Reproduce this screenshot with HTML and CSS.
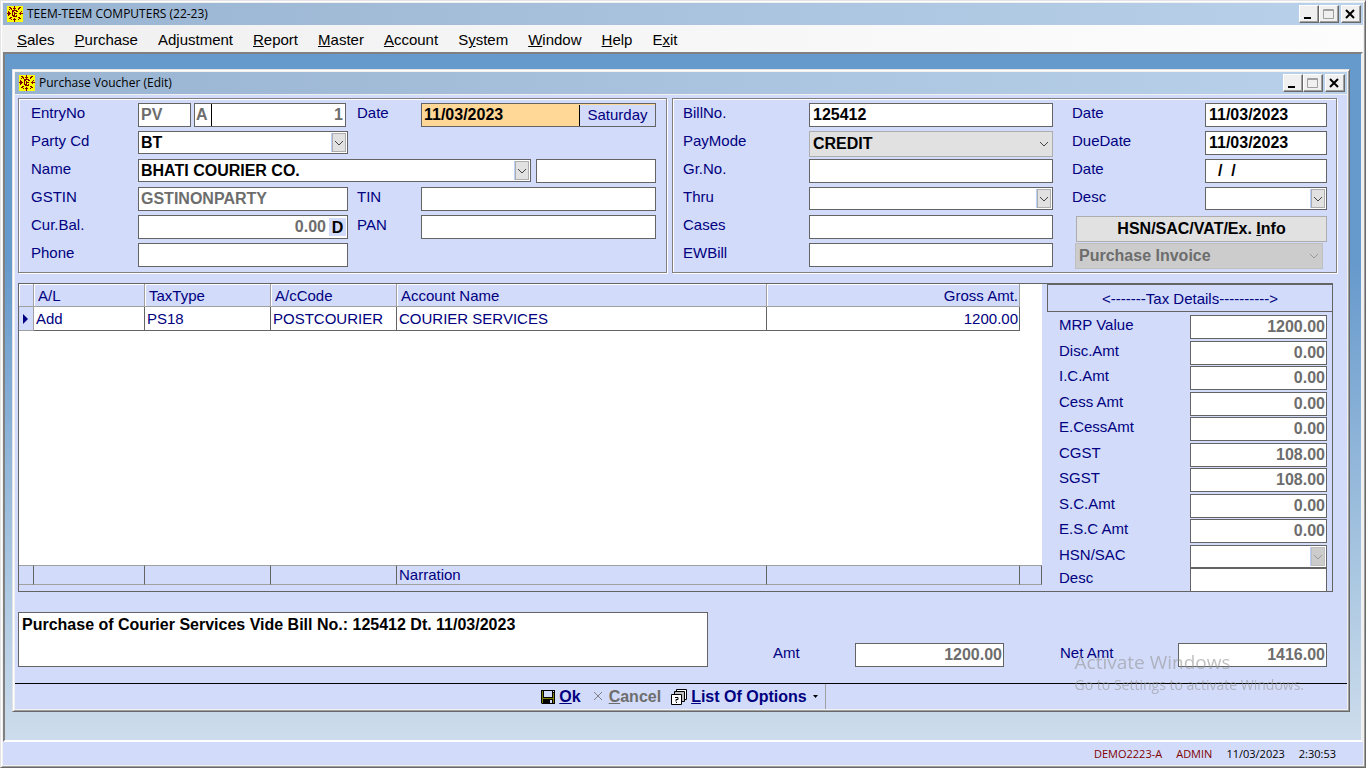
FILE: index.html
```html
<!DOCTYPE html>
<html lang="en">
<head>
  <meta charset="utf-8">
  <title>TEEM-TEEM COMPUTERS (22-23)</title>
  <link rel="stylesheet" href="styles.css">
</head>
<body>

<svg class="defs" aria-hidden="true">
  <symbol id="logo" viewBox="0 0 16 16">
    <rect width="16" height="16" fill="#ff0"/>
    <path d="M7 .5h1M2 1.500h2M7 1.500h1M12 1.500h2M3 2.500h2M6 2.500h3M11 2.500h2M2 3.500h1M4 3.500h1M7 3.500h1M11 3.500h1M5 4.500h5M1 5.500h1M5 5.500h2M9 5.500h2M14 5.500h1M1 6.500h2M5 6.500h1M7 6.500h1M13 6.500h1M0 7.500h4M5 7.500h1M7 7.500h3M12 7.500h4M1 8.500h2M5 8.500h1M7 8.500h1M13 8.500h1M1 9.500h1M5 9.500h2M7 9.500h1M9 9.500h1M6 10.500h4M3 11.500h2M11 11.500h2M2 12.500h2M7 12.500h1M12 12.500h2M4 13.500h1M6 13.500h3M11 13.500h1M7 14.500h1M7 15.500h1" fill="none" stroke="#800000"/>
  </symbol>
  <symbol id="min" viewBox="0 0 16 14"><path d="M4 10h7v2h-7z"/></symbol>
  <symbol id="max" viewBox="0 0 16 14"><path d="M3.500 2.500h10v9h-10zM3 3.500h11" fill="none" stroke="#a0a0a0"/></symbol>
  <symbol id="close" viewBox="0 0 16 14"><path d="M4 3l8 8M12 3l-8 8" fill="none" stroke="#000" stroke-width="2"/></symbol>
</svg>

<div class="app">
  <header class="titlebar">
    <svg class="logo"><use href="#logo"/></svg>
    <h1>TEEM-TEEM COMPUTERS (22-23)</h1>
    <div class="winbtns">
      <button aria-label="Minimize"><svg><use href="#min"/></svg></button>
      <button aria-label="Maximize"><svg><use href="#max"/></svg></button>
      <button aria-label="Close"><svg><use href="#close"/></svg></button>
    </div>
  </header>

  <nav class="menu">
    <a href="#"><u>S</u>ales</a>
    <a href="#"><u>P</u>urchase</a>
    <a href="#">Ad<u>j</u>ustment</a>
    <a href="#"><u>R</u>eport</a>
    <a href="#"><u>M</u>aster</a>
    <a href="#"><u>A</u>ccount</a>
    <a href="#">S<u>y</u>stem</a>
    <a href="#"><u>W</u>indow</a>
    <a href="#"><u>H</u>elp</a>
    <a href="#">E<u>x</u>it</a>
  </nav>

  <main class="desktop">
    <form class="voucher">
      <div class="titlebar">
        <svg class="logo"><use href="#logo"/></svg>
        <h2>Purchase Voucher (Edit)</h2>
        <div class="winbtns">
          <button type="button" aria-label="Minimize"><svg><use href="#min"/></svg></button>
          <button type="button" aria-label="Maximize"><svg><use href="#max"/></svg></button>
          <button type="button" aria-label="Close"><svg><use href="#close"/></svg></button>
        </div>
      </div>

      <div class="body">
        <div class="panels">
          <div class="panel party">
            <label for="series">EntryNo</label>
            <div class="entry">
              <input class="field" id="series" value="PV" disabled>
              <div class="field split">
                <input class="letter" aria-label="Entry book" value="A" disabled>
                <input class="num" aria-label="Entry number" value="1" disabled>
              </div>
            </div>
            <label class="mid" for="date">Date</label>
            <div class="field split date">
              <input id="date" value="11/03/2023">
              <span class="day">Saturday</span>
            </div>

            <label for="partycd">Party Cd</label>
            <select class="field combo" id="partycd"><option>BT</option></select>

            <label class="first" for="name">Name</label>
            <div class="name">
              <select class="field combo" id="name"><option>BHATI COURIER CO.</option></select>
              <input class="field" aria-label="City">
            </div>

            <label for="gstin">GSTIN</label>
            <input class="field" id="gstin" value="GSTINONPARTY" disabled>
            <label class="mid" for="tin">TIN</label>
            <input class="field" id="tin">

            <label for="bal">Cur.Bal.</label>
            <div class="field split">
              <input class="num" id="bal" value="0.00" disabled>
              <span class="drcr">D</span>
            </div>
            <label class="mid" for="pan">PAN</label>
            <input class="field" id="pan">

            <label for="phone">Phone</label>
            <input class="field" id="phone">
          </div>

          <div class="panel bill">
            <label for="billno">BillNo.</label>
            <input class="field" id="billno" value="125412">
            <label class="mid" for="billdate">Date</label>
            <input class="field" id="billdate" value="11/03/2023">

            <label for="paymode">PayMode</label>
            <select class="field list" id="paymode"><option>CREDIT</option></select>
            <label class="mid" for="duedate">DueDate</label>
            <input class="field" id="duedate" value="11/03/2023">

            <label for="grno">Gr.No.</label>
            <input class="field" id="grno">
            <label class="mid" for="grdate">Date</label>
            <input class="field" id="grdate" value="  /  /">

            <label for="thru">Thru</label>
            <select class="field combo" id="thru"><option></option></select>
            <label class="mid" for="desc">Desc</label>
            <select class="field combo" id="desc"><option></option></select>

            <label for="cases">Cases</label>
            <input class="field" id="cases">
            <button type="button" class="info">HSN/SAC/VAT/Ex. <u>I</u>nfo</button>

            <label for="ewbill">EWBill</label>
            <input class="field" id="ewbill">
            <select class="field list kind" aria-label="Invoice type" disabled><option>Purchase Invoice</option></select>
          </div>
        </div>

        <div class="details">
          <div class="items">
            <table>
              <colgroup>
                <col class="c-mark"><col class="c-al"><col class="c-code"><col class="c-code"><col><col class="c-amt"><col class="c-end">
              </colgroup>
              <thead>
                <tr><th></th><th>A/L</th><th>TaxType</th><th>A/cCode</th><th>Account Name</th><th class="r">Gross Amt.</th><td class="blank"></td></tr>
              </thead>
              <tbody>
                <tr class="item">
                  <th><svg width="6" height="10"><path d="M0 0l5 5l-5 5z" fill="#000080"/></svg></th>
                  <td>Add</td><td>PS18</td><td>POSTCOURIER</td><td>COURIER SERVICES</td><td class="r">1200.00</td><td class="blank"></td>
                </tr>
                <tr><td class="blank" colspan="7"></td></tr>
              </tbody>
              <tfoot>
                <tr><td></td><td></td><td></td><td></td><td>Narration</td><td></td><td></td></tr>
              </tfoot>
            </table>
          </div>

          <div class="tax">
            <h3>&lt;-------Tax Details----------&gt;</h3>
            <div class="taxrows">
              <div class="taxrow"><label for="mrp">MRP Value</label><input class="field num" id="mrp" value="1200.00" disabled></div>
              <div class="taxrow"><label for="disc">Disc.Amt</label><input class="field num" id="disc" value="0.00" disabled></div>
              <div class="taxrow"><label for="ic">I.C.Amt</label><input class="field num" id="ic" value="0.00" disabled></div>
              <div class="taxrow"><label for="cess">Cess Amt</label><input class="field num" id="cess" value="0.00" disabled></div>
              <div class="taxrow"><label for="ecess">E.CessAmt</label><input class="field num" id="ecess" value="0.00" disabled></div>
              <div class="taxrow"><label for="cgst">CGST</label><input class="field num" id="cgst" value="108.00" disabled></div>
              <div class="taxrow"><label for="sgst">SGST</label><input class="field num" id="sgst" value="108.00" disabled></div>
              <div class="taxrow"><label for="sc">S.C.Amt</label><input class="field num" id="sc" value="0.00" disabled></div>
              <div class="taxrow"><label for="esc">E.S.C Amt</label><input class="field num" id="esc" value="0.00" disabled></div>
              <div class="hsn">
                <div class="taxrow"><label for="hsn">HSN/SAC</label><select class="field combo" id="hsn" disabled><option></option></select></div>
                <div class="taxrow"><label for="hsndesc">Desc</label><input class="field" id="hsndesc" disabled></div>
              </div>
            </div>
          </div>
        </div>

        <div class="totals">
          <textarea aria-label="Narration">Purchase of Courier Services Vide Bill No.: 125412 Dt. 11/03/2023</textarea>
          <label for="amt">Amt</label>
          <input class="field num" id="amt" value="1200.00" disabled>
          <label class="net" for="netamt">Net Amt</label>
          <input class="field num" id="netamt" value="1416.00" disabled>
        </div>
      </div>

      <div class="toolbar">
        <button type="button">
          <svg width="14" height="14"><path d="M0 0h14v14H1l-1-1z"/><path d="M1 1h1v12H1zM12 3h1v10h-1zM2 8h10v1H2z" fill="#808000"/><path d="M3 1h8v6H3zM12 1h1v1h-1zM9 10h2v3H9z" fill="#d2dbfa"/></svg>
          <span><u>O</u>k</span>
        </button>
        <button type="button" disabled>
          <svg width="14" height="14"><path d="M3 2l8 8M11 2l-8 8" fill="none" stroke="#808080"/></svg>
          <span><u>C</u>ancel</span>
        </button>
        <button type="button">
          <svg width="16" height="16" fill="#fff" stroke="#000">
            <path d="M5.500 .5h10v10h-10z"/>
            <path d="M3.500 2.500h10v10h-10z" fill="#c0c0c0"/>
            <path d="M.5 5.500h10v10h-10z"/>
            <path d="M4 8.500h3v2h-2v2M5 13.500h1" fill="none"/>
          </svg>
          <span><u>L</u>ist Of Options</span>
          <svg class="arrow" width="5" height="3"><path d="M0 0h5L2.500 3z"/></svg>
        </button>
      </div>
    </form>
  </main>

  <footer class="status">
    <span class="user">DEMO2223-A</span>
    <span class="user">ADMIN</span>
    <span>11/03/2023</span>
    <span>2:30:53</span>
  </footer>
</div>

<div class="activate">
  <p class="big">Activate Windows</p>
  <p>Go to Settings to activate Windows.</p>
</div>

</body>
</html>
```
FILE: styles.css
```css
* {
    box-sizing: border-box;
}

body {
    margin: 0;
    font: 15px/20px "Liberation Sans", Arial, sans-serif;
    color: #000080;
}

h1, h2, h3, p {
    margin: 0;
    font-weight: normal;
}

button, input, select, textarea {
    margin: 0;
    font: bold 16px/20px "Liberation Sans", Arial, sans-serif;
    color: #000;
}

.defs {
    display: none;
}

/* main window */

.app {
    display: flex;
    flex-direction: column;
    min-height: 100vh;
    padding: 2px;
    background: #f0f0f0;
    border: 1px solid;
    border-color: #e3e3e3 #696969 #696969 #e3e3e3;
    box-shadow: inset 1px 1px #fff, inset -1px -1px #a0a0a0;
}

.titlebar {
    display: flex;
    align-items: center;
    height: 22px;
    padding: 0 2px 0 4px;
    background: linear-gradient(90deg, #99b4d1, #b9d1ea);
}

.titlebar h1, .titlebar h2 {
    flex: 1;
    margin-left: 4px;
    font: 12px/16px "Open Sans", "Noto Sans", sans-serif;
    color: #000;
}

.logo {
    width: 16px;
    height: 16px;
}

.winbtns {
    display: flex;
}

.winbtns button {
    width: 20px;
    height: 18px;
    padding: 0;
    background: #f0f0f0;
    border: 1px solid;
    border-color: #fff #696969 #696969 #fff;
    box-shadow: inset -1px -1px #a0a0a0;
}

.winbtns button:last-child {
    margin-left: 2px;
}

.winbtns svg {
    display: block;
    width: 16px;
    height: 14px;
}

.menu {
    display: flex;
    align-items: center;
    gap: 20px;
    height: 27px;
    padding: 3px 14px 0;
    background: linear-gradient(90deg, #f0f0f0, #fdfdfd);
}

.menu a {
    color: #000;
    text-decoration: none;
}

.desktop {
    display: flex;
    flex: 1;
    padding: 15px 11px 28px 7px;
    background: linear-gradient(#6699cc 30%, #b0cbe3 80%, #cddcec);
    border: 2px solid;
    border-color: #808080 #f0f0f0 #fff #808080;
}

.status {
    display: flex;
    justify-content: flex-end;
    align-items: center;
    gap: 14px;
    height: 23px;
    padding-right: 27px;
    font: 11px/16px "Open Sans", "Noto Sans", sans-serif;
    color: #000;
    background: #d2dbfa;
}

.user {
    color: #800000;
}

/* voucher window */

.voucher {
    display: flex;
    flex: 1;
    flex-direction: column;
    padding: 2px;
    background: #f0f0f0;
    border: 1px solid;
    border-color: #e3e3e3 #696969 #696969 #e3e3e3;
    box-shadow: inset 1px 1px #fff, inset -1px -1px #a0a0a0;
}

.body {
    display: flex;
    flex: 1;
    flex-direction: column;
    margin-top: 1px;
    padding: 3px 10px 16px 3px;
    background: #d2dbfa;
}

.panels {
    display: grid;
    grid-template-columns: 649fr 665fr;
    gap: 5px;
}

.panel {
    display: grid;
    grid-auto-rows: 24px;
    row-gap: 4px;
    border: 1px solid #808080;
    box-shadow: inset 1px 1px #fff, 1px 1px #fff;
}

.party {
    grid-template-columns: 107px minmax(0, 210fr) 73px minmax(0, 235fr);
    padding: 4px 10px 5px 12px;
}

.bill {
    grid-template-columns: 126px minmax(0, 244fr) 152px minmax(0, 122fr);
    padding: 4px 9px 5px 10px;
}

.first {
    grid-column: 1;
}

.party .mid {
    padding-left: 9px;
}

.bill .mid {
    padding-left: 19px;
}

.field {
    width: 100%;
    min-width: 0;
    height: 24px;
    padding: 0 2px;
    background: #fff;
    border: 1px solid #646464;
    border-radius: 0;
    appearance: none;
}

.field:disabled, .field input:disabled {
    color: #6d6d6d;
    opacity: 1;
}

.bill .field {
    padding: 0 3px;
}

.num {
    text-align: right;
    padding: 0 1px;
}

.combo {
    height: 23px;
    background: #fff url("data:image/svg+xml,%3Csvg xmlns='http://www.w3.org/2000/svg' width='15' height='19'%3E%3Crect width='1' height='19' fill='%23b9d1fa'/%3E%3Crect x='1.5' y='.5' width='13' height='18' fill='%23e1e1e1' stroke='%23adadad'/%3E%3Cpath d='M4 8l4 4l4-4' fill='none' stroke='%23444'/%3E%3C/svg%3E") no-repeat right 1px center;
}

.combo:disabled {
    background-image: url("data:image/svg+xml,%3Csvg xmlns='http://www.w3.org/2000/svg' width='15' height='19'%3E%3Crect width='1' height='19' fill='%23b9d1fa'/%3E%3Crect x='1.5' y='.5' width='13' height='18' fill='%23ccc' stroke='%23bfbfbf'/%3E%3Cpath d='M4 8l4 4l4-4' fill='none' stroke='%23999'/%3E%3C/svg%3E");
}

.list {
    height: 26px;
    background: #e1e1e1 url("data:image/svg+xml,%3Csvg xmlns='http://www.w3.org/2000/svg' width='10' height='6'%3E%3Cpath d='M1 1l4 4l4-4' fill='none' stroke='%23444'/%3E%3C/svg%3E") no-repeat right 3px center;
    border-color: #adadad;
}

.split {
    display: flex;
    padding: 0;
}

.split input {
    flex: 1;
    min-width: 0;
    padding: 0 2px;
    background: none;
    border: 0;
}

.split .letter {
    flex: none;
    width: 17px;
    padding: 0 1px;
    border-right: 1px solid #000;
}

.entry {
    display: flex;
    gap: 3px;
    padding-right: 2px;
}

.entry > input {
    width: 53px;
    flex: none;
}

.date {
    background: #ffd796;
}

.day {
    width: 76px;
    margin-top: 1px;
    text-align: center;
    background: #d2dbfa;
    border-left: 1px solid #000;
}

.drcr {
    width: 17px;
    margin: 2px 1px;
    font-size: 16px;
    font-weight: bold;
    text-align: center;
    color: #000;
    background: #d2dbfa;
}

.name {
    display: flex;
    gap: 5px;
    grid-column: 2 / 5;
}

.name select {
    flex: 1;
}

.name input {
    flex: none;
    width: 120px;
}

.info {
    grid-column: 3 / 5;
    height: 26px;
    margin: 1px 0 0 23px;
    padding: 0;
    background: #e1e1e1;
    border: 1px solid #adadad;
}

.kind {
    grid-column: 3 / 5;
    justify-self: end;
    width: calc(100% - 26px);
    margin-right: 4px;
}

.kind:disabled {
    background-color: #ccc;
    border-color: #bfbfbf;
    background-image: url("data:image/svg+xml,%3Csvg xmlns='http://www.w3.org/2000/svg' width='10' height='6'%3E%3Cpath d='M1 1l4 4l4-4' fill='none' stroke='%23999'/%3E%3C/svg%3E");
}

/* item grid and tax column */

.details {
    display: grid;
    flex: 1;
    grid-template-columns: 1fr 286px;
    gap: 5px;
    margin: 10px 4px 20px 0;
    border: 1px solid #646464;
    border-right: 0;
}

.items {
    padding-bottom: 6px;
}

table {
    width: 100%;
    height: 100%;
    table-layout: fixed;
    border-spacing: 0;
    background: #fff;
}

.c-mark { width: 15px; }
.c-al { width: 111px; }
.c-code { width: 126px; }
.c-amt { width: 253px; }
.c-end { width: 22px; }

th, td {
    padding: 0 2px;
    font-weight: normal;
    text-align: left;
    border: 0 solid #646464;
    border-width: 0 1px 1px 0;
}

th {
    height: 23px;
    padding: 0 4px;
    background: #d2dbfa;
    border-color: #a0a0a0;
}

thead th {
    padding-top: 2px;
    box-shadow: inset 1px 1px #fff;
}

tbody th svg {
    display: block;
}

.item {
    height: 24px;
}

.r {
    padding-right: 1px;
    text-align: right;
}

td.blank {
    border: 0;
}

tfoot td {
    height: 20px;
    line-height: 18px;
    background: #d2dbfa;
    border-width: 1px 1px 1px 0;
    border-color: #a0a0a0 #646464;
}

.tax {
    display: flex;
    flex-direction: column;
}

.tax h3 {
    height: 28px;
    font-size: 15px;
    line-height: 28px;
    text-align: center;
    border: 1px solid #646464;
}

.taxrows {
    display: flex;
    flex: 1;
    flex-direction: column;
    justify-content: space-between;
    padding: 3px 5px 0 12px;
    border-right: 1px solid #646464;
}

.taxrow {
    display: grid;
    grid-template-columns: 1fr 137px;
}

.hsn .field {
    height: 23px;
}

.hsn input {
    border-bottom: 0;
}

/* narration and totals */

.totals {
    display: grid;
    grid-template-columns: 690fr 147px 149fr 174px 149fr;
    align-items: end;
    margin-right: 10px;
}

.totals label {
    padding: 0 0 4px 65px;
}

.totals .net {
    padding-left: 56px;
}

textarea {
    height: 55px;
    padding: 2px 3px;
    border: 1px solid #646464;
    resize: none;
}

.toolbar {
    display: flex;
    justify-content: center;
    height: 26px;
    background: #d2dbfa;
    border-top: 1px solid #000;
}

.toolbar button {
    display: flex;
    align-items: center;
    gap: 4px;
    padding: 0 5px;
    color: #000080;
    background: none;
    border: 0;
}

.toolbar button:disabled {
    color: #6d6d6d;
}

.toolbar button:last-child {
    border-right: 1px solid #a0a0a0;
}

.arrow {
    margin: 0 2px;
}

/* system notice drawn over everything */

.activate {
    position: fixed;
    right: 62px;
    bottom: 73px;
    font: 14px/20px "Open Sans", "Noto Sans", sans-serif;
    color: rgba(150, 150, 150, .6);
    pointer-events: none;
}

.activate .big {
    font-size: 19px;
    line-height: 26px;
}
```
